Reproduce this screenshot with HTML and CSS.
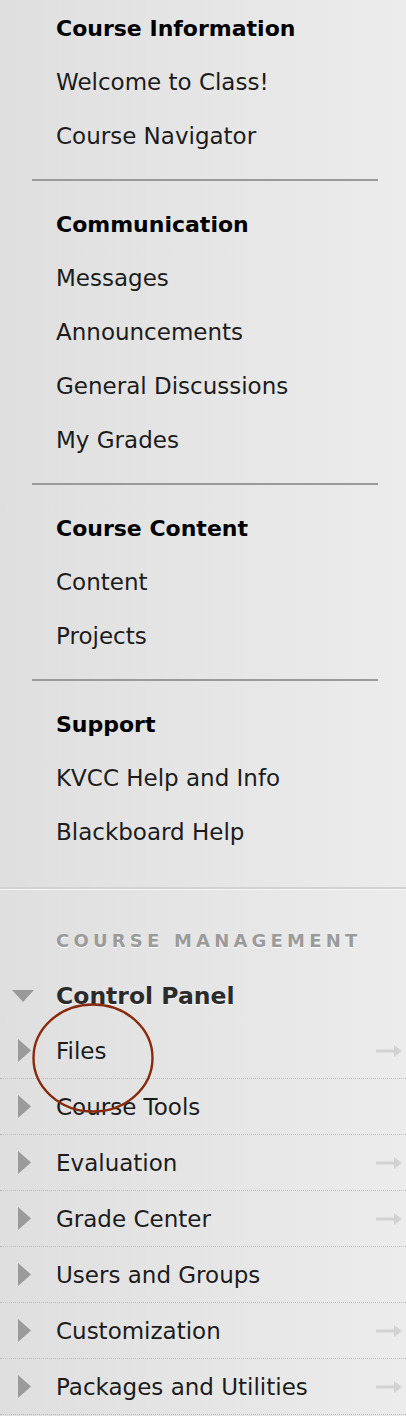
FILE: index.html
```html
<!DOCTYPE html>
<html lang="en">
<head>
<meta charset="UTF-8">
<meta name="viewport" content="width=device-width, initial-scale=1.0">
<title>Course Menu</title>
<link rel="stylesheet" href="styles.css">
</head>
<body>

<div class="sidebar">

	<!-- Course menu -->
	<ul class="menu-group first">
		<li class="menu-head">Course Information</li>
		<li>Welcome to Class!</li>
		<li>Course Navigator</li>
	</ul>
	<hr class="divider">
	<ul class="menu-group">
		<li class="menu-head">Communication</li>
		<li>Messages</li>
		<li>Announcements</li>
		<li>General Discussions</li>
		<li>My Grades</li>
	</ul>
	<hr class="divider">
	<ul class="menu-group">
		<li class="menu-head">Course Content</li>
		<li>Content</li>
		<li>Projects</li>
	</ul>
	<hr class="divider">
	<ul class="menu-group">
		<li class="menu-head">Support</li>
		<li>KVCC Help and Info</li>
		<li>Blackboard Help</li>
	</ul>

	<!-- Course management -->
	<div class="manage">
		<div class="manage-title">Course Management</div>
		<div class="panel-head">
			<svg class="tri-down" width="22" height="12" viewBox="0 0 22 12"><path d="M0 0H22L11 12Z"/></svg>
			Control Panel
		</div>
		<ul class="tools">
			<li><svg class="tri" width="13" height="23" viewBox="0 0 13 23"><path d="M0 0L13 11.5L0 23Z"/></svg><span class="tool-name">Files</span><svg class="go" width="27" height="14" viewBox="0 0 27 14"><path d="M0 5.5H19V8.5H0Z"/><path d="M18 1L26 7L18 13Z"/></svg></li>
			<li><svg class="tri" width="13" height="23" viewBox="0 0 13 23"><path d="M0 0L13 11.5L0 23Z"/></svg><span class="tool-name">Course Tools</span></li>
			<li><svg class="tri" width="13" height="23" viewBox="0 0 13 23"><path d="M0 0L13 11.5L0 23Z"/></svg><span class="tool-name">Evaluation</span><svg class="go" width="27" height="14" viewBox="0 0 27 14"><path d="M0 5.5H19V8.5H0Z"/><path d="M18 1L26 7L18 13Z"/></svg></li>
			<li><svg class="tri" width="13" height="23" viewBox="0 0 13 23"><path d="M0 0L13 11.5L0 23Z"/></svg><span class="tool-name">Grade Center</span><svg class="go" width="27" height="14" viewBox="0 0 27 14"><path d="M0 5.5H19V8.5H0Z"/><path d="M18 1L26 7L18 13Z"/></svg></li>
			<li><svg class="tri" width="13" height="23" viewBox="0 0 13 23"><path d="M0 0L13 11.5L0 23Z"/></svg><span class="tool-name">Users and Groups</span></li>
			<li><svg class="tri" width="13" height="23" viewBox="0 0 13 23"><path d="M0 0L13 11.5L0 23Z"/></svg><span class="tool-name">Customization</span><svg class="go" width="27" height="14" viewBox="0 0 27 14"><path d="M0 5.5H19V8.5H0Z"/><path d="M18 1L26 7L18 13Z"/></svg></li>
			<li><svg class="tri" width="13" height="23" viewBox="0 0 13 23"><path d="M0 0L13 11.5L0 23Z"/></svg><span class="tool-name">Packages and Utilities</span><svg class="go" width="27" height="14" viewBox="0 0 27 14"><path d="M0 5.5H19V8.5H0Z"/><path d="M18 1L26 7L18 13Z"/></svg></li>
		</ul>

		<!-- hand-drawn highlight round "Files" -->
		<svg class="mark" width="124" height="112" viewBox="0 0 124 112"><ellipse cx="62" cy="56" rx="59.5" ry="53.5"/></svg>
	</div>

</div>

</body>
</html>
```

FILE: styles.css
```css
body {
	margin: 0;
	font-family: "DejaVu Sans", Verdana, sans-serif;
	background-color: #e5e5e5;
}
.sidebar {
	min-height: 1416px;
	background: linear-gradient(to right, #dfdfdf, #ececec);
	overflow: hidden;
}
.menu-group {
	list-style: none;
	margin: 0;
	padding: 0;
}
.menu-group.first {
	padding-top: 1px;
}
.menu-group li {
	height: 54px;
	display: flex;
	align-items: center;
	padding-left: 56px;
	font-size: 23px;
	color: #1c1c1c;
}
.menu-group .menu-head {
	font-size: 22px;
	font-weight: bold;
	color: #000;
}
.divider {
	margin: 16px 28px 16px 32px;
	border: none;
	height: 2px;
	background-color: #9a9a9a;
}
.manage {
	position: relative;
	margin-top: 28px;
	border-top: 2px solid #d2d2d2;
	box-shadow: inset 0 1px 0 #f6f6f6;
}
.manage-title {
	margin-top: 40px;
	padding-left: 56px;
	font-size: 18px;
	font-weight: bold;
	letter-spacing: 4.2px;
	line-height: 24px;
	text-transform: uppercase;
	color: #9b9b9b;
	text-shadow: 0 1px 0 #fff;
}
.panel-head {
	height: 54px;
	margin-top: 16px;
	display: flex;
	align-items: center;
	font-size: 23.5px;
	font-weight: bold;
	color: #2b2b2b;
	text-shadow: 0 1px 0 #fff;
}
.tri-down {
	fill: #9a9a9a;
	margin: 0 22px 0 12px;
}
.tools {
	list-style: none;
	margin: 0;
	padding: 0;
}
.tools li {
	height: 55px;
	display: flex;
	align-items: center;
	border-bottom: 1px dotted #bcbcbc;
	font-size: 23px;
	color: #1c1c1c;
}
.tri {
	fill: #9a9a9a;
	margin: 0 25px 0 18px;
}
.tool-name {
	flex: 1;
}
.go {
	fill: #d2d2d2;
	margin-right: 3px;
}
.mark {
	position: absolute;
	left: 31px;
	top: 113px;
	fill: none;
	stroke: #8a2a0c;
	stroke-width: 2.4;
}
```
